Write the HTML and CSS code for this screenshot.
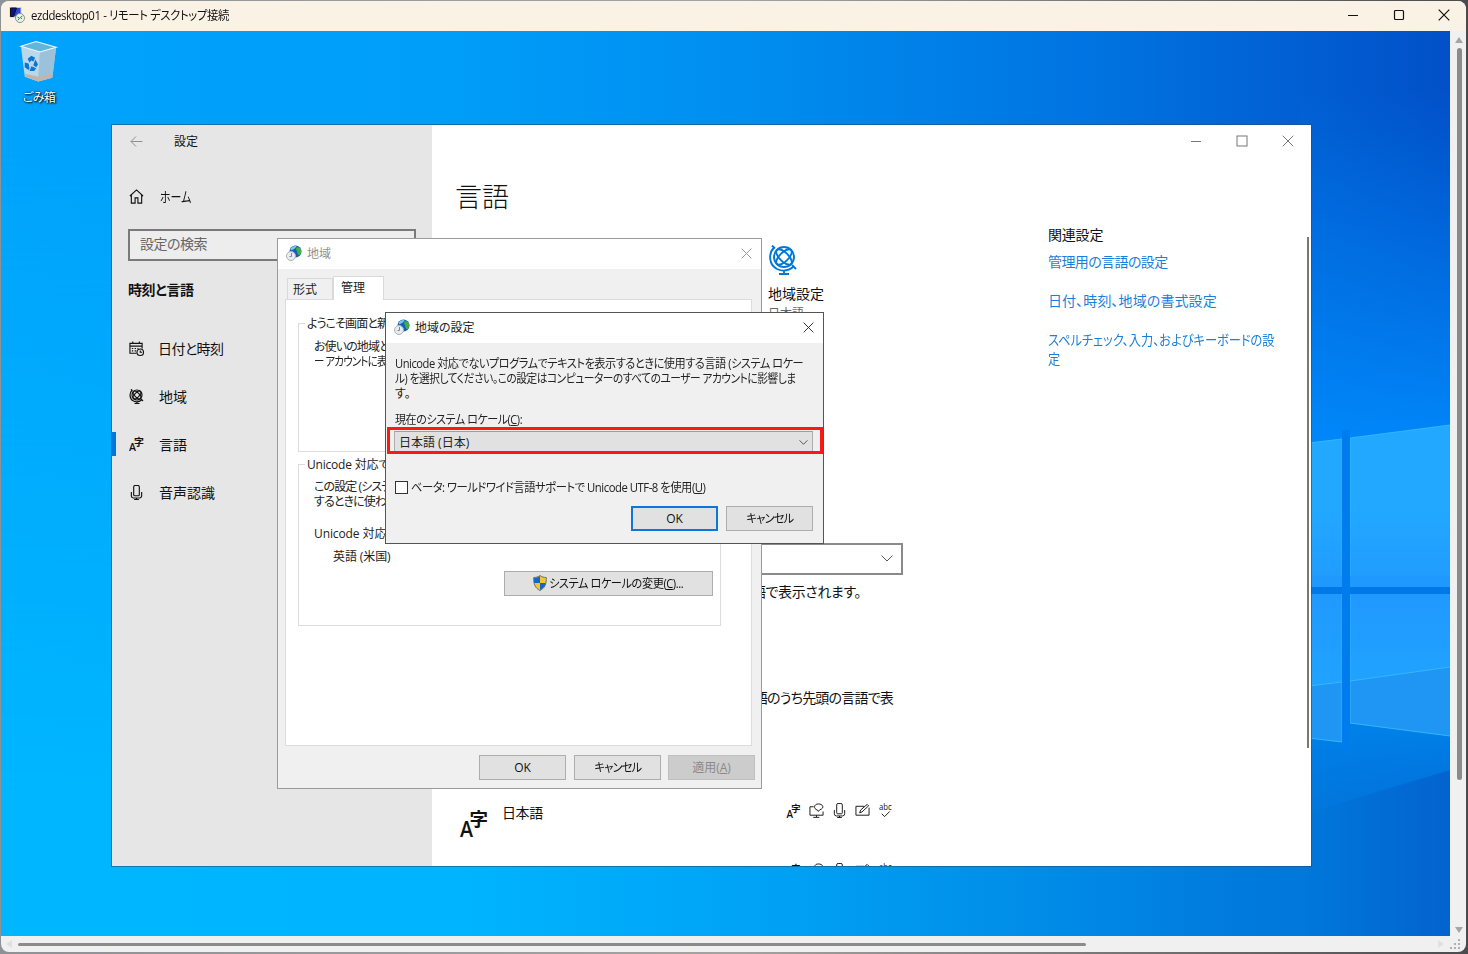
FILE: index.html
```html
<!DOCTYPE html>
<html lang="ja">
<head>
  <meta charset="UTF-8" />
  <title>ezddesktop01 - リモート デスクトップ接続</title>
  <meta name="viewport" content="width=device-width, initial-scale=1.0" />
  <link rel="stylesheet" href="styles.css">
</head>
<body>

  <!-- shared icons -->
  <svg class="defs">
    <symbol id="i-lang" viewBox="0 0 28 30">
      <text x="0" y="29" font-size="21" font-weight="600" textLength="13" lengthAdjust="spacingAndGlyphs">A</text>
      <text x="9.500" y="18" font-size="18.500" font-weight="700">字</text>
    </symbol>
    <symbol id="i-mic" viewBox="0 0 16 16">
      <path d="M5 2a1.500 1.500 0 0 1 1.500-1.500h3A1.500 1.500 0 0 1 11 2v8.500a1 1 0 0 1-1 1H6a1 1 0 0 1-1-1zM2.500 7.500v4a2.300 2.300 0 0 0 2.300 2.300h6.400a2.300 2.300 0 0 0 2.300-2.300v-4M8 13.800V15.500M5.500 15.500h5" />
    </symbol>
    <symbol id="i-globe" viewBox="0 0 28 30">
      <circle cx="15" cy="12" r="10" />
      <ellipse cx="15" cy="12" rx="10" ry="4.500" transform="rotate(45 15 12)" />
      <ellipse cx="15" cy="12" rx="10" ry="4.500" transform="rotate(-45 15 12)" />
      <path d="M5 2.500C-1 9 0 20 8 24c6 2.800 12 1.500 16.500-2.500M3 .5l3 3M23 20l4 4M15 25.500V29M10 29h10" />
    </symbol>
    <symbol id="i-region" viewBox="0 0 16 16">
      <circle cx="9.500" cy="6.500" r="6" fill="#1560b4" />
      <path d="M4.500 4c1-2.500 4-3.500 6-3-.5 2-2 3-3.500 3.500C6 5.500 5 5.500 4.500 4z" fill="#7cc6e8" />
      <path d="M10.500 2.500c2-1 4 .5 4.700 2.500.3 2-.2 4-1.700 5.500-1.500-1-2.500-2.500-2.500-4.500-1-1-1.200-2.500-.5-3.500z" fill="#3fae4c" />
      <circle cx="5" cy="11" r="4.500" fill="#e8ecef" stroke="#a9b2b9" />
      <path d="M5.500 8v3.500H3.500" fill="none" stroke="#7d8a95" />
    </symbol>
    <symbol id="i-close" viewBox="0 0 12 12"><path d="M.7.7l10.600 10.600M11.300.7L.7 11.300" /></symbol>
    <symbol id="i-down" viewBox="0 0 12 7"><path d="M.5.500L6 6 11.500.500" /></symbol>
    <symbol id="i-display" viewBox="0 0 16 16">
      <path d="M5 4H1v9h14V9M4.500 15.300h6.500M8 13v2M9 7.500C4.500 6.500 5 1 10 1s7 4.500 1.500 6.200L10 9z" />
    </symbol>
    <symbol id="i-pen" viewBox="0 0 16 16">
      <path d="M10 3.500H1v9.500h14V5M5 10.500l1-3L13 1.500l1.500 1.500-7 6.500z" />
    </symbol>
    <symbol id="i-abc" viewBox="0 0 16 16">
      <text x="1" y="7" font-size="9" textLength="13.500" lengthAdjust="spacingAndGlyphs">abc</text>
      <path d="M4 11.500l3 3 5.500-5.500" />
    </symbol>
  </svg>

  <div class="rdp">
    <header class="rdp-bar">
      <svg class="rdp-icon" viewBox="0 0 16 16">
        <rect x="1" y=".5" width="11" height="9.500" fill="#2a43d8" stroke="#c9ccd6" />
        <path d="M1.500 1h6l-3 8.500h-3z" fill="#0a1292" />
        <circle cx="11" cy="11" r="4.500" fill="#eef4ee" stroke="#8b918b" />
        <path d="M8.500 10l2 1.200-1.500 2M13.500 9l-2.200 1.500 1.700 1.500" fill="none" stroke="#2d8a38" />
      </svg>
      <span class="rdp-title">ezddesktop01 - リモート デスクトップ接続</span>
      <div class="rdp-buttons">
        <svg viewBox="0 0 12 12"><path d="M1 6.500h10" /></svg>
        <svg viewBox="0 0 12 12"><rect x="1.500" y="1.500" width="9" height="9" rx="1" /></svg>
        <svg viewBox="0 0 12 12"><use href="#i-close" /></svg>
      </div>
    </header>

    <div class="desktop">
      <svg class="wallpaper" viewBox="1 31 1449 905">
        <defs>
          <linearGradient id="sky" x1="0" x2="1" y1="0" y2="0">
            <stop offset="0" stop-color="#00a3fc" />
            <stop offset=".3" stop-color="#009ef9" />
            <stop offset=".5" stop-color="#008ff0" />
            <stop offset=".75" stop-color="#0074e2" />
            <stop offset="1" stop-color="#0250c8" />
          </linearGradient>
          <linearGradient id="ground" x1="0" x2="1" y1="0" y2="0">
            <stop offset="0" stop-color="#00b6ff" />
            <stop offset=".32" stop-color="#00b4ff" />
            <stop offset=".55" stop-color="#00a0f4" />
            <stop offset=".8" stop-color="#0082e2" />
            <stop offset="1" stop-color="#0268d4" />
          </linearGradient>
          <linearGradient id="fade" x1="0" x2="0" y1="0" y2="1">
            <stop offset=".1" stop-color="#000" />
            <stop offset=".85" stop-color="#fff" />
          </linearGradient>
          <mask id="lower"><rect x="1" y="31" width="1449" height="905" fill="url(#fade)" /></mask>
          <linearGradient id="right" x1="0" x2="0" y1="0" y2="1">
            <stop offset="0" stop-color="#0080f4" stop-opacity="0" />
            <stop offset=".5" stop-color="#008cff" />
            <stop offset=".8" stop-color="#0084ec" />
            <stop offset="1" stop-color="#0078dc" stop-opacity="0" />
          </linearGradient>
          <linearGradient id="pane" gradientUnits="userSpaceOnUse" x1="0" x2="0" y1="425" y2="735">
            <stop offset="0" stop-color="#22a9ff" />
            <stop offset=".25" stop-color="#22a9ff" />
            <stop offset=".55" stop-color="#2099ff" />
            <stop offset="1" stop-color="#20a8ff" />
          </linearGradient>
          <linearGradient id="corner" gradientUnits="userSpaceOnUse" x1="1150" x2="1450" y1="0" y2="0">
            <stop offset="0" stop-color="#007cdf" stop-opacity="0" />
            <stop offset=".5" stop-color="#0078dc" />
            <stop offset="1" stop-color="#0363cf" />
          </linearGradient>
        </defs>
        <rect x="1" y="31" width="1449" height="905" fill="url(#sky)" />
        <rect x="1" y="31" width="1449" height="905" fill="url(#ground)" mask="url(#lower)" />
        <rect x="1300" y="90" width="150" height="780" fill="url(#right)" />
        <path d="M1300 815L1450 770V936H1150V850z" fill="url(#corner)" />
        <path d="M1300 444l42-5v138h-42zM1350 438l100-13v152h-100zM1300 584h42v158l-42-5zM1350 584h100v152l-100-13z" fill="url(#pane)" />
        <path d="M1300 687l42-5v60l-42-5zM1350 681l100-14v69l-100-13z" fill="#2096f4" />
        <path d="M1300 444l42-5v138M1350 577V438l100-13M1342 584v158l-42-5M1350 584v139l100 13M1300 687l42-5M1350 681l100-14" fill="none" stroke="#38bdff" stroke-opacity=".8" />
        <path d="M1300 587h150v7h-150z" fill="#0079e8" />
        <path d="M1300 576h150v11h-150z" fill="#2099ff" />
        <path d="M1342 430h8v320h-8z" fill="#007cee" />
      </svg>

      <div class="trash">
        <svg viewBox="0 0 40 44">
          <path d="M1 6l20 5 17-4-4 32-15 4-14-5z" fill="#b9d8ec" />
          <path d="M21 11l17-4-4 32-15 4z" fill="#9cc2db" />
          <path d="M1 6l16-5 21 6-17 5z" fill="#62b5dc" stroke="#eef7fb" stroke-width="1.200" />
          <path d="M5 35l15 3 14-4-1 5-14 4-13-5z" fill="#c3b4ac" />
          <path d="M8 19l4-3 4 2-2 4-2-1-2 2zM16 20l3 5-2 3-3-2 1-3zM5 23l4 1 1 5-1 2-4-3zM12 27l5 2-2 3-5 0z" fill="#0d75cf" />
        </svg>
        <span>ごみ箱</span>
      </div>

      <!-- 設定 -->
      <section class="settings">
        <aside class="side">
          <div class="side-top">
            <svg class="back" viewBox="0 0 14 12"><path d="M6.500.500L1 6l5.500 5.500M1 6h12.500" /></svg>
            <span>設定</span>
          </div>
          <div class="home">
            <svg class="line" viewBox="0 0 16 16"><path d="M1 7.500L8 1l7 6.500M2.500 6.500V15h4V9.500h3V15h4V6.500" /></svg>
            <span>ホーム</span>
          </div>
          <div class="search"><span>設定の検索</span></div>
          <h2>時刻と言語</h2>
          <ul class="nav">
            <li>
              <svg class="line" viewBox="0 0 16 16"><path d="M8 13H1V2.500h13V8M1 5.500h13M4 .5v2M11 .5v2M3 8h1.500M6 8h1.500M9 8h1M3 10.500h1.500M6 10.500h1.500" /><circle cx="12" cy="12" r="3.500" /><path d="M12 10v2h2" /></svg>
              <span class="wide">日付と時刻</span>
            </li>
            <li><svg class="line globe"><use href="#i-globe" /></svg><span>地域</span></li>
            <li class="active"><svg class="lang"><use href="#i-lang" /></svg><span>言語</span></li>
            <li><svg class="line"><use href="#i-mic" /></svg><span>音声認識</span></li>
          </ul>
        </aside>

        <main class="main">
          <div class="win-buttons">
            <svg viewBox="0 0 12 12"><path d="M1 6.500h10" /></svg>
            <svg viewBox="0 0 12 12"><rect x="1" y="1" width="10" height="10" /></svg>
            <svg viewBox="0 0 12 12"><use href="#i-close" /></svg>
          </div>
          <h1>言語</h1>
          <div class="columns">
            <div class="content">
              <div class="tile">
                <svg><use href="#i-globe" /></svg>
                <b>地域設定</b>
                <small>日本語</small>
              </div>
              <div class="select"><svg><use href="#i-down" /></svg></div>
              <p class="note one">語で表示されます。</p>
              <p class="note two">語のうち先頭の言語で表</p>
              <div class="lang-row">
                <svg class="big"><use href="#i-lang" /></svg>
                <span>日本語</span>
                <div class="features">
                  <svg class="lang"><use href="#i-lang" /></svg>
                  <svg><use href="#i-display" /></svg>
                  <svg><use href="#i-mic" /></svg>
                  <svg><use href="#i-pen" /></svg>
                  <svg><use href="#i-abc" /></svg>
                </div>
              </div>
              <div class="lang-row">
                <div class="features">
                  <svg class="lang"><use href="#i-lang" /></svg>
                  <svg><use href="#i-display" /></svg>
                  <svg><use href="#i-mic" /></svg>
                  <svg><use href="#i-pen" /></svg>
                  <svg><use href="#i-abc" /></svg>
                </div>
              </div>
            </div>
            <div class="related">
              <h3>関連設定</h3>
              <a class="admin">管理用の言語の設定</a>
              <a class="format">日付、時刻、地域の書式設定</a>
              <a class="spell">スペルチェック、入力、およびキーボードの設<br>定</a>
            </div>
            <div class="page-scroll"></div>
          </div>
        </main>
      </section>

      <!-- 地域 -->
      <section class="dialog region">
        <div class="dialog-bar">
          <svg class="region-icon"><use href="#i-region" /></svg>
          <span>地域</span>
          <svg class="x"><use href="#i-close" /></svg>
        </div>
        <div class="tabs"><span>形式</span><span class="on">管理</span></div>
        <div class="panel">
          <fieldset class="welcome">
            <legend>ようこそ画面と新</legend>
            <p>お使いの地域と<br><span class="account">ー アカウントに表</span></p>
          </fieldset>
          <fieldset class="unicode">
            <legend>Unicode 対応で</legend>
            <p>この設定 (システ<br>するときに使われ</p>
            <p class="current">Unicode 対応</p>
            <p class="value">英語 (米国)</p>
            <button class="change">
              <svg viewBox="0 0 14 16">
                <path d="M7 .5C5 2 3 2.500.700 2.500.500 9 2 13 7 15.500 12 13 13.500 9 13.300 2.500 11 2.500 9 2 7 .5z" fill="#f5c430" stroke="#4b5a6c" stroke-width=".8" />
                <path d="M7 1v7H1.200C.9 6 1 4.500 1 3 3 3 5 2.400 7 1zM7 8h5.700c-.7 3.500-2.700 5.700-5.700 7z" fill="#1766c4" />
              </svg>
              <span>システム ロケールの変更(<u>C</u>)...</span>
            </button>
          </fieldset>
        </div>
        <div class="dialog-foot">
          <button>OK</button>
          <button><span class="cancel">キャンセル</span></button>
          <button class="off">適用(<u>A</u>)</button>
        </div>
      </section>

      <!-- 地域の設定 -->
      <section class="dialog locale">
        <div class="dialog-bar">
          <svg class="region-icon"><use href="#i-region" /></svg>
          <span>地域の設定</span>
          <svg class="x"><use href="#i-close" /></svg>
        </div>
        <p class="message">
          <span class="m1">Unicode 対応でないプログラムでテキストを表示するときに使用する言語 (システム ロケー</span>
          <span class="m2">ル) を選択してください。この設定はコンピューターのすべてのユーザー アカウントに影響しま</span>
          <span>す。</span>
        </p>
        <p class="label">現在のシステム ロケール(<u>C</u>):</p>
        <div class="marked">
          <div class="combo"><span>日本語 (日本)</span><svg><use href="#i-down" /></svg></div>
        </div>
        <div class="check"><span class="box"></span><span class="beta">ベータ: ワールドワイド言語サポートで Unicode UTF-8 を使用(<u>U</u>)</span></div>
        <div class="dialog-foot">
          <button class="default">OK</button>
          <button><span class="cancel">キャンセル</span></button>
        </div>
      </section>
    </div>

    <div class="vscroll"><i class="up"></i><b></b><i class="down"></i></div>
    <div class="hscroll"><i class="left"></i><b></b><i class="right"></i></div>
    <svg class="grip" viewBox="0 0 12 12"><path d="M8 0h2v2H8zM8 4h2v2H8zM8 8h2v2H8zM4 4h2v2H4zM4 8h2v2H4zM0 8h2v2H0z" /></svg>
  </div>

</body>
</html>
```
FILE: styles.css
```css
* {
  box-sizing: border-box;
}

html, body {
  margin: 0;
  padding: 0;
  height: 954px;
  overflow: hidden;
  background: linear-gradient(to right, #8d9296 0, #a5a3a2 50%, #4b4b4d 100%);
  font-family: "Open Sans", "Noto Sans CJK JP", sans-serif;
  font-feature-settings: "palt";
  font-size: 12px;
  color: #111;
}

h1, h2, h3, p, ul {
  margin: 0;
  padding: 0;
  list-style: none;
}

svg {
  display: block;
  flex: none;
  fill: none;
  stroke: currentColor;
  overflow: visible;
}

text {
  fill: currentColor;
  stroke: none;
}

span, b, small, a, p, legend, h2 {
  white-space: nowrap;
}

i {
  font-style: normal;
}

.defs {
  display: none;
}

/* remote desktop window */
.rdp {
  display: grid;
  grid-template: 30px 905px 16px / 1449px 16px;
  width: 1465px;
  height: 951px;
  margin: 1px 0 0 1px;
  border-radius: 8px;
  overflow: hidden;
  background: #f0f0f0;
}

.rdp-bar {
  grid-column: 1 / 3;
  display: flex;
  align-items: center;
  background: #fbf2e6;
  padding: 0 16px 2px 8px;
}

.rdp-icon {
  width: 16px;
  height: 16px;
  margin-right: 6px;
}

.rdp-title {
  letter-spacing: -0.4px;
  transform: scaleX(.946);
  transform-origin: 0 0;
}

.rdp-buttons {
  display: flex;
  gap: 33.5px;
  margin-left: auto;
}

.rdp-buttons svg {
  width: 12px;
  height: 12px;
  stroke-width: 1.2;
}

.desktop {
  position: relative;
  overflow: hidden;
}

.wallpaper {
  width: 1449px;
  height: 905px;
  stroke: none;
}

.trash {
  position: absolute;
  left: 8px;
  top: 9px;
  width: 60px;
  display: flex;
  flex-direction: column;
  align-items: center;
  color: #fff;
  line-height: 16px;
  letter-spacing: -0.6px;
  text-shadow: 1px 1px 2px #000, 0 0 2px #000;
}

.trash svg {
  width: 38px;
  height: 43px;
  stroke: none;
  margin-bottom: 7px;
}

/* settings app */
.settings {
  position: absolute;
  left: 111px;
  top: 94px;
  width: 1199px;
  height: 741px;
  display: flex;
  overflow: hidden;
  background: #fff;
  box-shadow: 0 0 0 1px rgba(30, 80, 120, .6);
}

.side {
  width: 320px;
  background: #e6e6e6;
  font-size: 14px;
}

.side-top {
  display: flex;
  align-items: center;
  height: 32px;
  padding-left: 18px;
  font-size: 12px;
}

.back {
  width: 13px;
  height: 11px;
  margin-right: 31px;
  color: #888;
}

.home {
  display: flex;
  align-items: center;
  gap: 16px;
  height: 48px;
  margin-top: 15px;
  padding-left: 17px;
}

.home span {
  transform: scaleX(.78);
  transform-origin: 0 0;
}

.line {
  width: 15px;
  height: 15px;
  stroke-width: 1.2;
}

.search {
  width: 288px;
  height: 32px;
  margin: 9px 0 0 16px;
  border: 2px solid #7a7a7a;
  background: #ededed;
  color: #666;
  padding-left: 10px;
  line-height: 25px;
  letter-spacing: -0.5px;
}

.side h2 {
  margin: 19px 0 0 16px;
  font-size: 14px;
  line-height: 20px;
  letter-spacing: -0.4px;
}

.nav {
  margin-top: 24px;
}

.nav li {
  display: flex;
  align-items: center;
  gap: 15px;
  height: 48px;
  padding-left: 17px;
}

.nav .wide {
  margin-left: -1px;
  letter-spacing: -0.6px;
}

.nav .active {
  background: linear-gradient(#0078d7, #0078d7) 0 12px / 4px 24px no-repeat;
}

.globe {
  stroke-width: 2.4;
}

.lang {
  width: 15px;
  height: 16px;
}

.main {
  width: 879px;
}

.win-buttons {
  display: flex;
  justify-content: flex-end;
  align-items: center;
  gap: 34px;
  height: 32px;
  padding-right: 17px;
  color: #777;
}

.win-buttons svg {
  width: 12px;
  height: 12px;
}

.main h1 {
  margin: 20px 0 0 23px;
  font-size: 27px;
  font-weight: 300;
  line-height: 40px;
}

.columns {
  display: flex;
  font-size: 14px;
}

.content {
  width: 447px;
  margin: 28px 0 0 24px;
}

.tile {
  display: flex;
  flex-direction: column;
  margin-left: 312px;
}

.tile svg {
  width: 28px;
  height: 30px;
  color: #0078d7;
  stroke-width: 1.9;
  margin-left: 1px;
}

.tile b {
  font-weight: 400;
  line-height: 20px;
  margin-top: 9px;
}

.tile small {
  font-size: 12px;
  line-height: 18px;
  color: #666;
  margin-top: 1px;
}

.select {
  display: flex;
  justify-content: flex-end;
  align-items: center;
  height: 32px;
  margin-top: 220px;
  padding: 0 8px 2px 0;
  border: 2px solid #8a8a8a;
  color: #555;
}

.select svg {
  width: 12px;
  height: 7px;
}

.note {
  display: flex;
  justify-content: flex-end;
  line-height: 20px;
}

.one {
  margin: 7px 42px 0 0;
  letter-spacing: -0.4px;
}

.two {
  margin: 86px 10px 0 0;
  letter-spacing: -0.8px;
}

.lang-row {
  display: flex;
  height: 60px;
  margin-left: 4px;
}

.two + .lang-row {
  margin-top: 93px;
}

.big {
  width: 28px;
  height: 30px;
  margin: 7px 14px 0 0;
}

.lang-row span {
  line-height: 24px;
  letter-spacing: -0.4px;
}

.features {
  display: flex;
  gap: 8px;
  margin: 2px 10px 0 auto;
}

.features svg {
  width: 15px;
  height: 15px;
}

.related {
  width: 259px;
  margin: 8px 0 0 145px;
}

.related h3 {
  font-size: 14px;
  font-weight: 400;
  line-height: 20px;
  letter-spacing: -0.2px;
}

.related a {
  display: block;
  margin-bottom: 21px;
  line-height: 18.5px;
  color: #1a7fdc;
}

.related .admin {
  margin: 8px 0 20px;
  letter-spacing: -0.6px;
}

.related .format {
  letter-spacing: 0.1px;
}

.related .spell {
  transform: scaleX(.873);
  transform-origin: 0 0;
}

.page-scroll {
  width: 2px;
  height: 511px;
  margin-top: 20px;
  background: #7b7773;
}

/* classic dialogs */
.dialog {
  position: absolute;
  background: #f0f0f0;
  border: 1px solid #9b9b9b;
  line-height: 15px;
  color: #222;
}

.dialog-bar {
  display: flex;
  align-items: center;
  height: 30px;
  padding: 0 9px 2px 8px;
  background: #fff;
}

.region-icon {
  width: 16px;
  height: 16px;
  stroke: none;
  margin-right: 5px;
}

.x {
  width: 11px;
  height: 11px;
  margin-left: auto;
}

.dialog button {
  display: flex;
  justify-content: center;
  align-items: center;
  width: 87px;
  height: 25px;
  padding: 0;
  font: inherit;
  color: #111;
  background: #e1e1e1;
  border: 1px solid #adadad;
}

.dialog .cancel {
  letter-spacing: -0.9px;
  transform: scaleX(.94);
}

.dialog-foot {
  display: flex;
  justify-content: flex-end;
  gap: 8px;
}

.region {
  left: 276px;
  top: 207px;
  width: 485px;
  height: 551px;
}

.region .dialog-bar span,
.region .x {
  color: #909090;
}

.tabs {
  display: flex;
  align-items: flex-end;
  height: 30px;
  padding-left: 9px;
}

.tabs span {
  width: 46px;
  height: 21px;
  padding: 3px 0 0 5px;
  border: 1px solid #d9d9d9;
  border-bottom: 0;
}

.tabs .on {
  width: 51px;
  height: 24px;
  margin-bottom: -1px;
  padding-left: 7px;
  background: #fff;
  position: relative;
}

.panel {
  width: 467px;
  height: 447px;
  margin: 0 0 0 7px;
  padding: 14px 0 0 12px;
  background: #fff;
  border: 1px solid #dcdcdc;
}

fieldset {
  width: 423px;
  margin: 0;
  padding: 0 0 0 15px;
  border: 1px solid #dcdcdc;
}

legend {
  margin-left: -9px;
  padding: 2px 2px 0;
  line-height: 16px;
}

.welcome {
  height: 138px;
  padding-top: 7px;
}

.welcome legend,
.welcome p,
.unicode p {
  letter-spacing: -0.9px;
}

.account {
  display: inline-block;
  transform: scaleX(.87);
  transform-origin: 0 0;
}

.unicode legend {
  letter-spacing: -0.2px;
}

.unicode {
  height: 171px;
  margin-top: 3px;
  padding-top: 6px;
}

.unicode .current,
.unicode .value {
  letter-spacing: -0.1px;
}

.current {
  margin-top: 17px;
}

.value {
  margin: 8px 0 7px 19px;
}

.dialog .change {
  width: 209px;
  margin-left: 190px;
}

.change svg {
  width: 14px;
  height: 16px;
  stroke: none;
  margin: 0 2px 2px 8px;
}

.change span {
  letter-spacing: -0.5px;
  transform: scaleX(.935);
  transform-origin: 0 0;
}

.region .dialog-foot {
  padding: 9px 6px 0 0;
}

.dialog .off {
  margin-left: -1px;
  background: #ccc;
  border-color: #bfbfbf;
  color: #8a8a8a;
}

.locale {
  left: 384px;
  top: 281px;
  width: 439px;
  height: 232px;
  border-color: #555;
}

.message {
  display: flex;
  flex-direction: column;
  align-items: flex-start;
  width: 410px;
  margin: 13px 0 0 9px;
}

.label {
  margin: 11px 0 0 9px;
}

.m1,
.m2,
.label,
.beta {
  letter-spacing: -0.5px;
  transform-origin: 0 0;
}

.m1 {
  transform: scaleX(.93);
}

.m2 {
  transform: scaleX(.89);
}

.label {
  transform: scaleX(.92);
}

.beta {
  transform: scaleX(.942);
}

.marked {
  width: 436px;
  height: 27px;
  margin: 0 0 0 1px;
  padding: 1px 7px 0 4px;
  border: 3px solid #fb1a12;
}

.combo {
  display: flex;
  justify-content: space-between;
  align-items: center;
  height: 20px;
  padding: 1px 4px 0;
  background: #e1e1e1;
  border: 1px solid #adadad;
  border-top-color: #7fa9b5;
  border-bottom: 0;
}

.combo svg {
  width: 9px;
  height: 5px;
  color: #555;
  stroke-width: 1.4;
}

.check {
  display: flex;
  align-items: center;
  gap: 3px;
  margin: 26px 0 0 9px;
}

.box {
  width: 13px;
  height: 13px;
  background: #fff;
  border: 1px solid #333;
}

.locale .dialog-foot {
  padding: 11px 10px 0 0;
}

.dialog .default {
  border: 2px solid #0f76d8;
}

/* scrollbars of the remote session */
.vscroll {
  display: flex;
  flex-direction: column;
  align-items: center;
  padding: 6px 0 3px 2px;
}

.vscroll b {
  width: 5px;
  height: 732px;
  margin: 5px 0 auto;
  border-radius: 3px;
  background: #8b8b8b;
}

.hscroll {
  display: flex;
  align-items: center;
  padding: 0 6px 0 5px;
}

.hscroll b {
  width: 1068px;
  height: 3px;
  margin: 1px auto 0 6px;
  border-radius: 2px;
  background: #8b8b8b;
}

.up,
.down {
  border: 4px solid transparent;
  border-top: 0;
  border-bottom: 6px solid #a5a5a5;
}

.down {
  border-bottom: 0;
  border-top: 6px solid #a5a5a5;
}

.left,
.right {
  border: 4px solid transparent;
  border-left: 0;
  border-right: 6px solid #e0e0e0;
}

.right {
  border-right: 0;
  border-left: 6px solid #e0e0e0;
}

.grip {
  width: 12px;
  height: 12px;
  margin-top: 3px;
  fill: #b0b0b0;
  stroke: none;
}
```
